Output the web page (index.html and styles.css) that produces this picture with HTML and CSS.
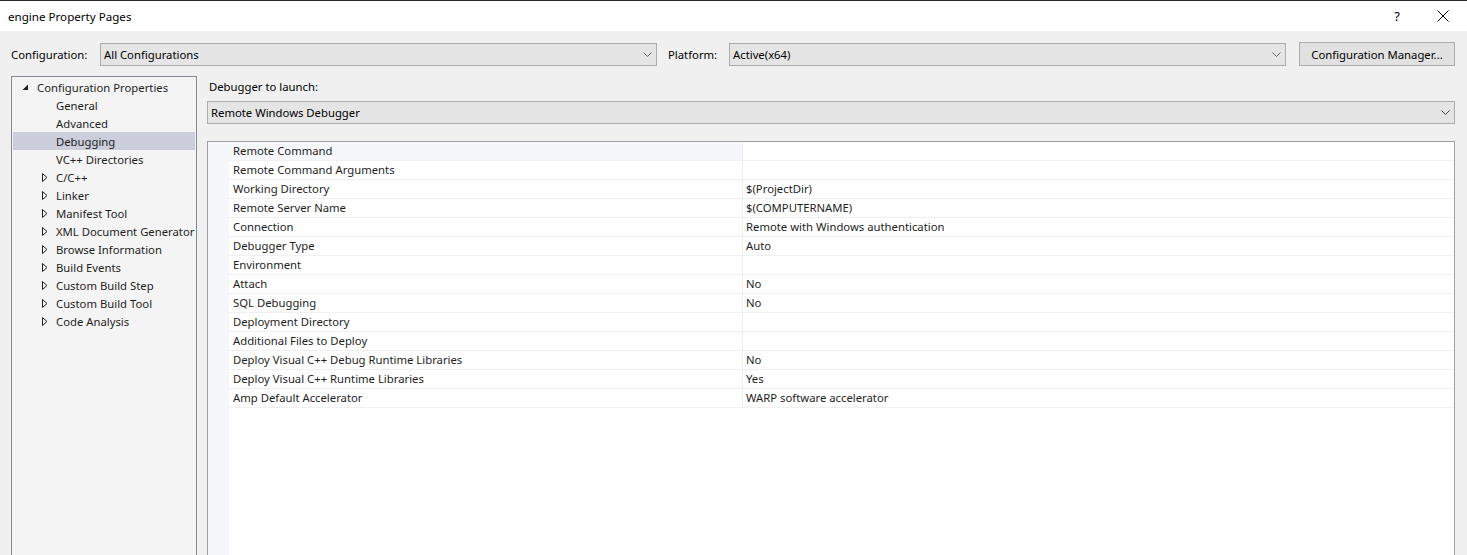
FILE: index.html
```html
<!DOCTYPE html>
<html>
<head>
<meta charset="utf-8">
<link rel="stylesheet" href="styles.css">
</head>
<body>
<div class="window">
  <div class="titlebar">
    <span class="title">engine Property Pages</span>
    <span class="help">?</span>
    <svg class="close" width="12" height="12" viewBox="0 0 12 12"><path d="M0.5 0.5L11.5 11.5M11.5 0.5L0.5 11.5" stroke="#000" stroke-width="1" fill="none"/></svg>
  </div>
  <div class="body">
    <div class="configbar">
      <span class="lbl lbl-config">Configuration:</span>
      <div class="combo combo-config"><span>All Configurations</span><svg class="chev" width="9" height="5" viewBox="0 0 9 5"><path d="M0.5 0.5L4.5 4.5L8.5 0.5" stroke="#666" fill="none"/></svg></div>
      <span class="lbl lbl-platform">Platform:</span>
      <div class="combo combo-platform"><span>Active(x64)</span><svg class="chev" width="9" height="5" viewBox="0 0 9 5"><path d="M0.5 0.5L4.5 4.5L8.5 0.5" stroke="#666" fill="none"/></svg></div>
      <div class="button">Configuration Manager...</div>
    </div>
    <div class="content">
      <div class="tree">
        <div class="node lvl0"><svg class="tri" width="7" height="7" viewBox="0 0 7 7"><path d="M6 0.5L6 6L0.5 6Z" fill="#1e1e1e"/></svg><span>Configuration Properties</span></div>
        <div class="node lvl1">General</div>
        <div class="node lvl1">Advanced</div>
        <div class="node lvl1 selected">Debugging</div>
        <div class="node lvl1">VC++ Directories</div>
        <div class="node lvl1c"><svg class="tri2" width="6" height="9" viewBox="0 0 6 9"><path d="M0.5 0.5L5 4.5L0.5 8.5Z" fill="none" stroke="#1e1e1e"/></svg><span>C/C++</span></div>
        <div class="node lvl1c"><svg class="tri2" width="6" height="9" viewBox="0 0 6 9"><path d="M0.5 0.5L5 4.5L0.5 8.5Z" fill="none" stroke="#1e1e1e"/></svg><span>Linker</span></div>
        <div class="node lvl1c"><svg class="tri2" width="6" height="9" viewBox="0 0 6 9"><path d="M0.5 0.5L5 4.5L0.5 8.5Z" fill="none" stroke="#1e1e1e"/></svg><span>Manifest Tool</span></div>
        <div class="node lvl1c"><svg class="tri2" width="6" height="9" viewBox="0 0 6 9"><path d="M0.5 0.5L5 4.5L0.5 8.5Z" fill="none" stroke="#1e1e1e"/></svg><span>XML Document Generator</span></div>
        <div class="node lvl1c"><svg class="tri2" width="6" height="9" viewBox="0 0 6 9"><path d="M0.5 0.5L5 4.5L0.5 8.5Z" fill="none" stroke="#1e1e1e"/></svg><span>Browse Information</span></div>
        <div class="node lvl1c"><svg class="tri2" width="6" height="9" viewBox="0 0 6 9"><path d="M0.5 0.5L5 4.5L0.5 8.5Z" fill="none" stroke="#1e1e1e"/></svg><span>Build Events</span></div>
        <div class="node lvl1c"><svg class="tri2" width="6" height="9" viewBox="0 0 6 9"><path d="M0.5 0.5L5 4.5L0.5 8.5Z" fill="none" stroke="#1e1e1e"/></svg><span>Custom Build Step</span></div>
        <div class="node lvl1c"><svg class="tri2" width="6" height="9" viewBox="0 0 6 9"><path d="M0.5 0.5L5 4.5L0.5 8.5Z" fill="none" stroke="#1e1e1e"/></svg><span>Custom Build Tool</span></div>
        <div class="node lvl1c"><svg class="tri2" width="6" height="9" viewBox="0 0 6 9"><path d="M0.5 0.5L5 4.5L0.5 8.5Z" fill="none" stroke="#1e1e1e"/></svg><span>Code Analysis</span></div>
      </div>
      <div class="panel">
        <div class="launch-lbl">Debugger to launch:</div>
        <div class="combo combo-launch"><span>Remote Windows Debugger</span><svg class="chev" width="9" height="5" viewBox="0 0 9 5"><path d="M0.5 0.5L4.5 4.5L8.5 0.5" stroke="#444" fill="none"/></svg></div>
        <div class="grid">
          <div class="row first"><div class="gut"></div><div class="name">Remote Command</div><div class="val"></div></div>
          <div class="row"><div class="gut"></div><div class="name">Remote Command Arguments</div><div class="val"></div></div>
          <div class="row"><div class="gut"></div><div class="name">Working Directory</div><div class="val">$(ProjectDir)</div></div>
          <div class="row"><div class="gut"></div><div class="name">Remote Server Name</div><div class="val">$(COMPUTERNAME)</div></div>
          <div class="row"><div class="gut"></div><div class="name">Connection</div><div class="val">Remote with Windows authentication</div></div>
          <div class="row"><div class="gut"></div><div class="name">Debugger Type</div><div class="val">Auto</div></div>
          <div class="row"><div class="gut"></div><div class="name">Environment</div><div class="val"></div></div>
          <div class="row"><div class="gut"></div><div class="name">Attach</div><div class="val">No</div></div>
          <div class="row"><div class="gut"></div><div class="name">SQL Debugging</div><div class="val">No</div></div>
          <div class="row"><div class="gut"></div><div class="name">Deployment Directory</div><div class="val"></div></div>
          <div class="row"><div class="gut"></div><div class="name">Additional Files to Deploy</div><div class="val"></div></div>
          <div class="row"><div class="gut"></div><div class="name">Deploy Visual C++ Debug Runtime Libraries</div><div class="val">No</div></div>
          <div class="row"><div class="gut"></div><div class="name">Deploy Visual C++ Runtime Libraries</div><div class="val">Yes</div></div>
          <div class="row"><div class="gut"></div><div class="name">Amp Default Accelerator</div><div class="val">WARP software accelerator</div></div>
        </div>
      </div>
    </div>
  </div>
</div>
</body>
</html>
```

FILE: styles.css
```css
* { box-sizing: border-box; }
html, body { margin: 0; padding: 0; }
body {
  width: 1467px;
  height: 555px;
  overflow: hidden;
  font-family: "Noto Sans", "Open Sans", sans-serif;
  font-size: 11.3px;
  color: #1a1a1a;
  background: #f0f0f0;
}
svg { flex-shrink: 0; }
.window { display: flex; flex-direction: column; height: 555px; }
.titlebar {
  height: 31px;
  background: #fff;
  border-top: 1px solid #2b2b2b;
  display: flex;
  align-items: center;
  padding-left: 8px;
  flex-shrink: 0;
}
.title { color: #000; flex: 1; font-size: 11.6px; }
.help { font-size: 13px; color: #000; margin-right: 37px; }
.close { margin-right: 18px; }
.body { flex: 1; display: flex; flex-direction: column; padding: 11px 12px 0 11px; min-height: 0; }
.configbar { display: flex; align-items: center; height: 24px; flex-shrink: 0; }
.lbl { color: #000; }
.lbl-config { width: 89px; }
.lbl-platform { width: 61px; margin-left: 11px; }
.combo {
  height: 23px;
  flex-shrink: 0;
  background: #e5e5e5;
  border: 1px solid #acacac;
  display: flex;
  align-items: center;
  padding-left: 3px;
  padding-right: 4px;
  color: #000;
}
.combo span { flex: 1; }
.combo-config, .combo-platform { width: 557px; }
.button {
  margin-left: 13px;
  width: 156px;
  height: 24px;
  background: #e1e1e1;
  border: 1px solid #adadad;
  display: flex;
  align-items: center;
  justify-content: center;
  color: #000;
}
.content { flex: 1; display: flex; margin-top: 10px; min-height: 0; }
.tree {
  width: 186px;
  background: #f4f4f4;
  border: 1px solid #828790;
  border-bottom: none;
  padding: 1px 1px 0;
}
.node { height: 18px; display: flex; align-items: center; white-space: nowrap; color: #1e1e1e; }
.lvl0 { padding-left: 9px; }
.lvl0 .tri { margin-right: 8px; margin-top: 1px; }
.lvl1 { padding-left: 43px; }
.lvl1c { padding-left: 29px; }
.lvl1c .tri2 { margin-right: 8px; }
.selected { background: #cccedb; }
.panel { flex: 1; margin-left: 10px; display: flex; flex-direction: column; min-width: 0; }
.launch-lbl { height: 18px; line-height: 18px; margin-top: 2px; padding-left: 2px; color: #000; flex-shrink: 0; }
.combo-launch { margin-top: 5px; width: 100%; }
.grid {
  margin-top: 17px;
  flex: 1;
  min-height: 0;
  overflow: hidden;
  background: linear-gradient(to right, #f5f7fb 21px, #fff 21px);
  border: 1px solid #a0a0a0;
  border-bottom: none;
}
.row { display: flex; height: 19px; }
.gut { width: 21px; flex-shrink: 0; }
.name {
  width: 514px;
  padding-left: 4px;
  line-height: 18px;
  border-bottom: 1px solid #f0f0f0;
  border-right: 1px solid #f0f0f0;
  flex-shrink: 0;
  color: #1e1e1e;
}
.row.first .name { background: #f5f7fb; }
.val { flex: 1; padding-left: 3px; line-height: 18px; border-bottom: 1px solid #f0f0f0; color: #1e1e1e; }
```
